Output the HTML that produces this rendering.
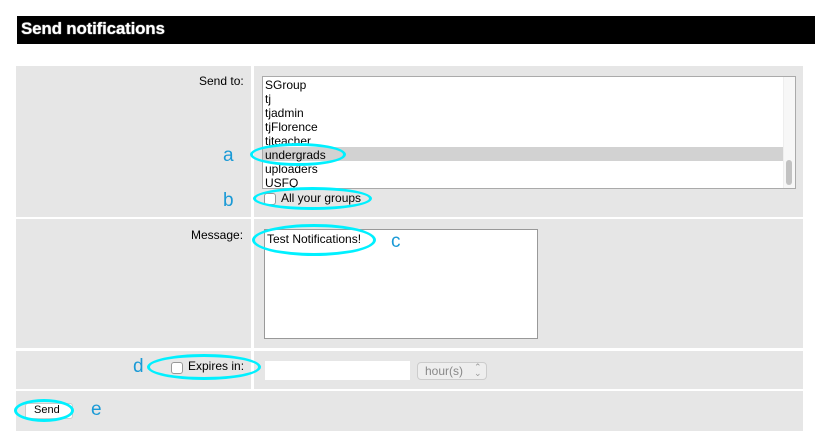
<!DOCTYPE html><html><head><style>
body{margin:0;width:832px;height:448px;background:#fff;font-family:"Liberation Sans",sans-serif;font-size:12px;color:#000;position:relative;overflow:hidden}
div{position:absolute;box-sizing:border-box}
.g{background:#e6e6e6}
.t{position:absolute;white-space:nowrap}
.ell{border:3px solid #00f0ff;border-radius:50%}
.L{color:#1a9ad6;font-size:19px}
</style></head><body>
<div style="left:17px;top:16px;width:798px;height:28px;background:#000"></div>
<span class="t" style="left:21px;top:19px;color:#fff;font-weight:bold;font-size:17px;letter-spacing:-0.2px;text-shadow:0 0 1px #fff">Send notifications</span>
<div class="g" style="left:16px;top:66px;width:235px;height:151px"></div>
<div class="g" style="left:254px;top:66px;width:549px;height:151px"></div>
<div class="g" style="left:16px;top:219px;width:235px;height:129px"></div>
<div class="g" style="left:254px;top:219px;width:549px;height:129px"></div>
<div class="g" style="left:16px;top:351px;width:235px;height:38px"></div>
<div class="g" style="left:254px;top:351px;width:549px;height:38px"></div>
<div class="g" style="left:16px;top:391px;width:787px;height:40px"></div>
<span class="t" style="left:199px;top:74px">Send to:</span>
<div style="left:262px;top:76px;width:534px;height:113px;background:#fff;border:1px solid #aaa;overflow:hidden">
<div style="left:0;top:70px;width:520px;height:14px;background:#d2d2d2"></div>
<div style="left:520px;top:0;width:12px;height:111px;background:#f7f7f7;border-left:1px solid #eee"></div>
<div style="left:523px;top:83px;width:6px;height:25px;background:#c2c2c2;border-radius:3px"></div>
<div style="left:2px;top:1px;line-height:14px;font-size:12px">SGroup<br>tj<br>tjadmin<br>tjFlorence<br>tjteacher<br>undergrads<br>uploaders<br>USFQ</div>
</div>
<div style="left:264px;top:193px;width:12px;height:12px;border:1px solid #999;border-radius:3px;background:#fff"></div>
<span class="t" style="left:281px;top:191px">All your groups</span>
<span class="t" style="left:191px;top:228px">Message:</span>
<div style="left:264px;top:229px;width:274px;height:110px;background:#fff;border:1px solid #999"></div>
<span class="t" style="left:267px;top:232px">Test Notifications!</span>
<div style="left:171px;top:362px;width:12px;height:12px;border:1px solid #999;border-radius:3px;background:#fff"></div>
<span class="t" style="left:188px;top:359px">Expires in:</span>
<div style="left:265px;top:361px;width:145px;height:19px;background:#fff"></div>
<div style="left:417px;top:362px;width:70px;height:18px;background:#eee;border:1px solid #ccc;border-radius:4px"></div>
<span class="t" style="left:425px;top:364px;color:#888">hour(s)</span>
<span class="t" style="left:474px;top:364px;color:#999;font-size:9px;line-height:6px">⌃<br>⌄</span>
<div style="left:25px;top:403px;width:48px;height:16px;background:#fff;border:1px solid #ccc;border-radius:3px"></div>
<span class="t" style="left:34px;top:404px;font-size:11px">Send</span>
<div class="ell" style="left:250px;top:143px;width:96px;height:23px"></div>
<div class="ell" style="left:253px;top:187px;width:119px;height:23px"></div>
<div class="ell" style="left:252px;top:224px;width:124px;height:32px"></div>
<div class="ell" style="left:147px;top:354px;width:114px;height:26px"></div>
<div class="ell" style="left:14px;top:399px;width:60px;height:23px"></div>
<span class="t L" style="left:223px;top:145px">a</span>
<span class="t L" style="left:223px;top:190px">b</span>
<span class="t L" style="left:391px;top:231px">c</span>
<span class="t L" style="left:133px;top:356px">d</span>
<span class="t L" style="left:91px;top:399px">e</span>
</body></html>
